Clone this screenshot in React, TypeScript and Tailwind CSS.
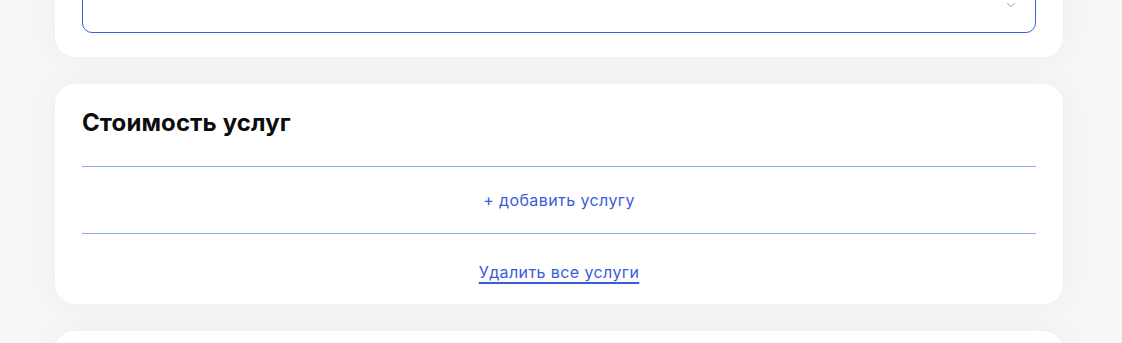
import { ChevronDown } from 'lucide-react';

const font = { fontFamily: 'Inter, "Noto Sans", sans-serif' };

export default function App() {
  return (
    <div className="h-[343px] overflow-hidden bg-[#f6f6f6]" style={font}>
      <div className="ml-[55px] flex w-[1008px] flex-col gap-[27px]">
        {/* previous card, cropped at the top */}
        <div className="-mt-[50px] rounded-[20px] bg-white px-[27px] pb-[24px] pt-[27px] shadow-[0_0_30px_rgba(0,0,0,0.04)]">
          <div className="flex h-[56px] items-center justify-end rounded-[10px] border border-[#3065dc] px-[17px]">
            <ChevronDown className="h-[14px] w-[14px] text-[#8a8a8a]" strokeWidth={1.5} />
          </div>
        </div>

        <div className="rounded-[20px] bg-white px-[27px] pb-[20px] pt-[25px] shadow-[0_0_30px_rgba(0,0,0,0.04)]">
          <h2 className="mb-[29px] text-[24px] font-bold leading-[28px] tracking-[0.1px] text-[#0d0d0d]">
            Стоимость услуг
          </h2>
          <div className="flex h-[67px] items-center justify-center border-t border-[#8eaaf2]">
            <button className="text-[16px] leading-[24px] tracking-[0.4px] text-[#3b5bd9]">+ добавить услугу</button>
          </div>
          <div className="flex justify-center border-t border-[#8eaaf2] pt-[26px]">
            <button className="text-[16px] leading-[24px] tracking-[0.4px] text-[#3b5bd9] underline decoration-[#3b5bd9] decoration-[1.5px] underline-offset-[4px]">
              Удалить все услуги
            </button>
          </div>
        </div>

        <div className="h-[60px] shrink-0 rounded-[20px] bg-white shadow-[0_0_30px_rgba(0,0,0,0.04)]" />
      </div>
    </div>
  );
}
